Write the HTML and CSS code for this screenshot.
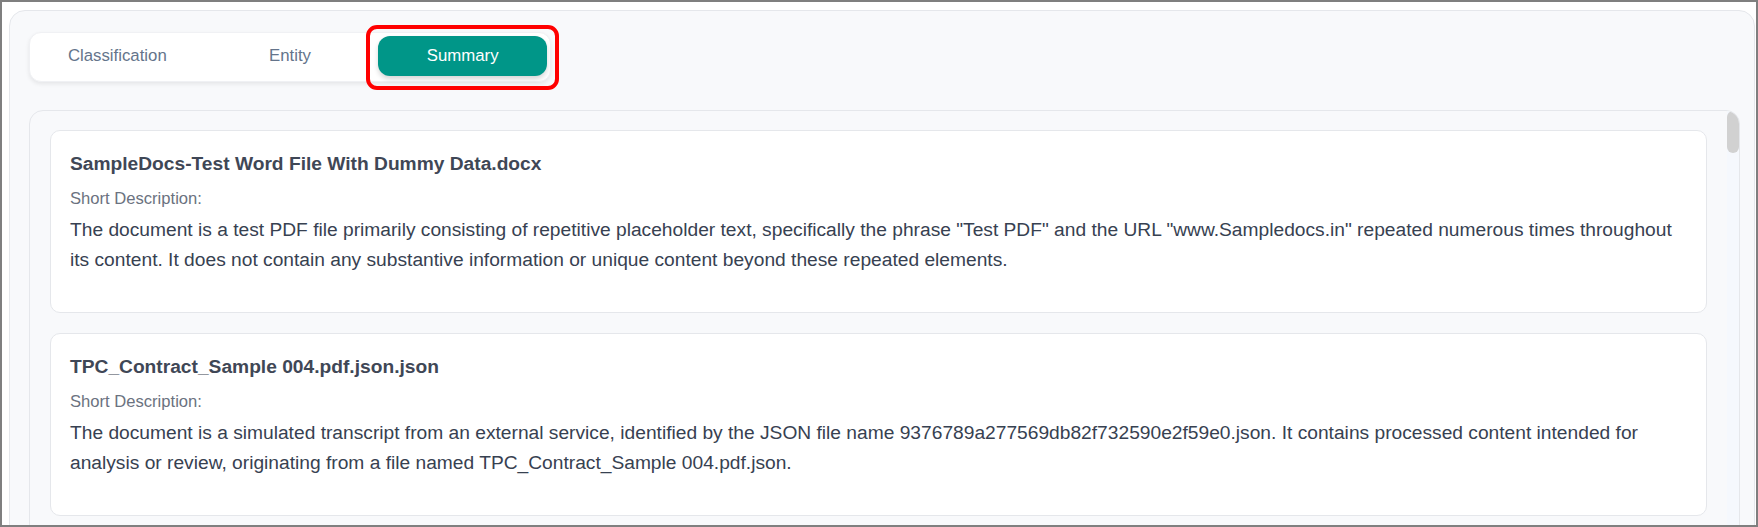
FILE: index.html
```html
<!DOCTYPE html>
<html lang="en">
<head>
<meta charset="utf-8">
<title>Summary</title>
<link rel="stylesheet" href="styles.css">
</head>
<body>
<div class="frame">
  <div class="panel">
    <div class="tabs-wrap">
      <div class="tabs">
        <button class="tab">Classification</button>
        <button class="tab">Entity</button>
        <button class="tab active">Summary</button>
      </div>
      <span class="highlight"></span>
    </div>
    <div class="content">
      <div class="list">
        <article class="card">
          <h3 class="card-title">SampleDocs-Test Word File With Dummy Data.docx</h3>
          <div class="card-label">Short Description:</div>
          <p class="card-text">The document is a test PDF file primarily consisting of repetitive placeholder text, specifically the phrase "Test PDF" and the URL "www.Sampledocs.in" repeated numerous times throughout its content. It does not contain any substantive information or unique content beyond these repeated elements.</p>
        </article>
        <article class="card">
          <h3 class="card-title">TPC_Contract_Sample 004.pdf.json.json</h3>
          <div class="card-label">Short Description:</div>
          <p class="card-text">The document is a simulated transcript from an external service, identified by the JSON file name 9376789a277569db82f732590e2f59e0.json. It contains processed content intended for analysis or review, originating from a file named TPC_Contract_Sample 004.pdf.json.</p>
        </article>
      </div>
      <div class="scrollbar"><div class="thumb"></div></div>
    </div>
  </div>
</div>
</body>
</html>
```

FILE: styles.css
```css
html, body {
  margin: 0;
  padding: 0;
  background: #ffffff;
}

body {
  font-family: "Liberation Sans", Arial, sans-serif;
}

.frame {
  box-sizing: border-box;
  width: 1758px;
  height: 527px;
  border: 2px solid #7f7f7f;
  padding: 8px 1px 0 7px;
  overflow: hidden;
  background: #ffffff;
}

.panel {
  box-sizing: border-box;
  height: 600px;
  border: 1px solid #e5e7eb;
  border-radius: 16px;
  background: #f8f9fb;
  padding: 21px 14px 0 19px;
}

.tabs-wrap {
  position: relative;
  width: 522px;
}

.tabs {
  box-sizing: border-box;
  width: 522px;
  height: 50px;
  display: grid;
  grid-template-columns: repeat(3, 1fr);
  column-gap: 4px;
  padding: 3px 3px 5px 3px;
  background: #ffffff;
  border: 1px solid #f0f1f4;
  border-radius: 12px;
  box-shadow: 0 2px 4px rgba(0, 0, 0, 0.08);
}

.tab {
  border: 0;
  background: transparent;
  font-family: "Liberation Sans", Arial, sans-serif;
  font-size: 16.8px;
  color: #64748b;
  border-radius: 12px;
  cursor: pointer;
  padding: 0;
}

.tab.active {
  background: #009688;
  color: #ffffff;
  box-shadow: 0 3px 5px rgba(0, 0, 0, 0.16);
}

.highlight {
  position: absolute;
  box-sizing: border-box;
  left: 337px;
  top: -7px;
  width: 193px;
  height: 65px;
  border: 4px solid #ff0000;
  border-radius: 11px;
  pointer-events: none;
}

.content {
  margin-top: 28px;
  display: flex;
  height: 460px;
  border: 1px solid #e5e7eb;
  border-radius: 14px;
  background: #f8f9fb;
  overflow: hidden;
}

.list {
  flex: 1;
  display: flex;
  flex-direction: column;
  gap: 20px;
  padding: 19px 20px 20px 20px;
}

.scrollbar {
  width: 12px;
  flex: none;
  background: #f5f8fd;
}

.thumb {
  height: 42px;
  border-radius: 6px;
  background: #d1d1d1;
}

.card {
  background: #ffffff;
  border: 1px solid #e5e7eb;
  border-radius: 10px;
  padding: 20px 19px;
}

.card-title {
  margin: 0;
  font-size: 19.2px;
  line-height: 26px;
  font-weight: 700;
  color: #3f4756;
}

.card-label {
  margin-top: 10px;
  font-size: 16.6px;
  line-height: 24px;
  color: #6b7280;
}

.card-text {
  margin: 4px 0 17px 0;
  font-size: 19.2px;
  line-height: 30px;
  color: #374151;
}
```
